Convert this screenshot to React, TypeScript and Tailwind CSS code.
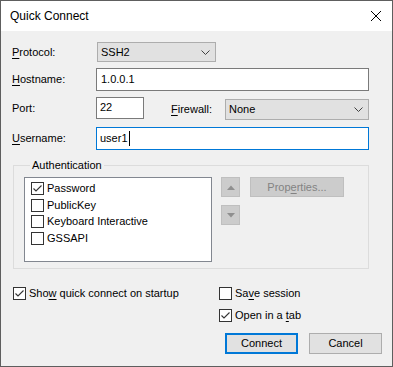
import React from "react";

const Chevron = () => (
  <svg width="9" height="5" viewBox="0 0 9 5" className="block">
    <path d="M0.5 0.5 L4.5 4.5 L8.5 0.5" fill="none" stroke="#404040" strokeWidth="1" />
  </svg>
);

const Check = ({ checked }: { checked: boolean }) => (
  <span className="w-[13px] h-[13px] border border-[#333333] bg-white flex items-center justify-center shrink-0">
    {checked && (
      <svg width="11" height="11" viewBox="0 0 11 11" className="block">
        <path d="M1.5 5.5 L4 8 L9.5 2.5" fill="none" stroke="#333333" strokeWidth="1.1" />
      </svg>
    )}
  </span>
);

const U = ({ children }: { children: React.ReactNode }) => <span className="underline underline-offset-[2px]">{children}</span>;

export default function App() {
  return (
    <div className="w-[393px] h-[367px] border border-[#5e5e5e] bg-[#f0f0f0] flex flex-col font-['Liberation_Sans',Arial,sans-serif] text-[11px] text-black leading-none">
      {/* Title bar */}
      <div className="h-[30px] bg-white flex items-center justify-between pl-[9px] pr-[9px] shrink-0">
        <span className="text-[12px]">Quick Connect</span>
        <svg width="12" height="12" viewBox="0 0 12 12" className="block mr-[1px]">
          <path d="M1 1 L11 11 M11 1 L1 11" stroke="#000" strokeWidth="1" />
        </svg>
      </div>

      <div className="flex flex-col pl-[11px] pr-[10px]">
        {/* Protocol */}
        <div className="flex items-center mt-[11px] h-[20px]">
          <span className="w-[85px]"><U>P</U>rotocol:</span>
          <div className="w-[119px] h-[20px] border border-[#adadad] bg-[#e1e1e1] flex items-center justify-between pl-[3px] pr-[5px]">
            <span>SSH2</span>
            <Chevron />
          </div>
        </div>

        {/* Hostname */}
        <div className="flex items-center mt-[6px] h-[23px]">
          <span className="w-[84px]"><U>H</U>ostname:</span>
          <div className="w-[273px] h-[23px] border border-[#7a7a7a] bg-white flex items-center pl-[4px]">
            <span>1.0.0.1</span>
          </div>
        </div>

        {/* Port / Firewall */}
        <div className="flex items-start mt-[6px] h-[22px]">
          <span className="w-[84px] h-[22px] flex items-center">Port:</span>
          <div className="w-[48px] h-[22px] border border-[#7a7a7a] bg-white flex items-center pl-[3px] pb-[2px]">
            <span>22</span>
          </div>
          <span className="ml-[27px] w-[54px] h-[22px] flex items-center mt-[1px]"><U>F</U>irewall:</span>
          <div className="mt-[2px] w-[144px] h-[21px] border border-[#adadad] bg-[#e1e1e1] flex items-center justify-between pl-[3px] pr-[5px]">
            <span>None</span>
            <Chevron />
          </div>
        </div>

        {/* Username */}
        <div className="flex items-center mt-[8px] h-[23px]">
          <span className="w-[84px]"><U>U</U>sername:</span>
          <div className="w-[273px] h-[23px] border border-[#0078d7] bg-white flex items-center pl-[3px]">
            <span>user1</span>
            <span className="w-[1px] h-[15px] bg-black ml-[1px]" />
          </div>
        </div>

        {/* Authentication group */}
        <fieldset className="mt-[7px] ml-[1px] w-[356px] border border-[#dcdcdc] pl-[10px] pt-[4px] pb-[6px] flex">
          <legend className="ml-[6px] px-[2px] h-[16px] leading-[16px]">Authentication</legend>
          <div className="flex items-start">
            <div className="w-[188px] h-[85px] border border-[#828790] bg-white flex flex-col pl-[6px] pt-[4px]">
              {[
                ["Password", true],
                ["PublicKey", false],
                ["Keyboard Interactive", false],
                ["GSSAPI", false],
              ].map(([label, checked]) => (
                <div key={label as string} className="h-[16.67px] flex items-start gap-[3px]">
                  <Check checked={checked as boolean} />
                  <span className="leading-[13px]">{label as string}</span>
                </div>
              ))}
            </div>
            <div className="flex flex-col ml-[9px] gap-[8px]">
              <div className="w-[19px] h-[20px] border border-[#bfbfbf] bg-[#cccccc] flex items-center justify-center">
                <svg width="8" height="5" viewBox="0 0 8 5" className="block">
                  <path d="M0 5 L4 0.5 L8 5 Z" fill="#8f8f8f" />
                </svg>
              </div>
              <div className="w-[19px] h-[20px] border border-[#bfbfbf] bg-[#cccccc] flex items-center justify-center">
                <svg width="8" height="5" viewBox="0 0 8 5" className="block">
                  <path d="M0 0 L4 4.5 L8 0 Z" fill="#8f8f8f" />
                </svg>
              </div>
            </div>
            <div className="ml-[10px] w-[94px] h-[20px] border border-[#bfbfbf] bg-[#cccccc] flex items-center justify-center text-[#838383]">
              <span>Prop<U>e</U>rties...</span>
            </div>
          </div>
        </fieldset>

        {/* Options */}
        <div className="flex mt-[16px]">
          <div className="w-[207px] flex flex-col pl-[1px]">
            <div className="h-[17px] flex items-center gap-[3px]">
              <Check checked={true} />
              <span>Sho<U>w</U> quick connect on startup</span>
            </div>
          </div>
          <div className="flex flex-col gap-[5px]">
            <div className="h-[17px] flex items-center gap-[3px]">
              <Check checked={false} />
              <span>Sa<U>v</U>e session</span>
            </div>
            <div className="h-[17px] flex items-center gap-[3px]">
              <Check checked={true} />
              <span>Open in a <U>t</U>ab</span>
            </div>
          </div>
        </div>

        {/* Buttons */}
        <div className="flex justify-end gap-[11px] mt-[9px] pr-[0px]">
          <div className="w-[73px] h-[21px] border-2 border-[#0078d7] bg-[#e1e1e1] flex items-center justify-center">
            Connect
          </div>
          <div className="w-[73px] h-[21px] border border-[#adadad] bg-[#e1e1e1] flex items-center justify-center">
            Cancel
          </div>
        </div>
      </div>
    </div>
  );
}
